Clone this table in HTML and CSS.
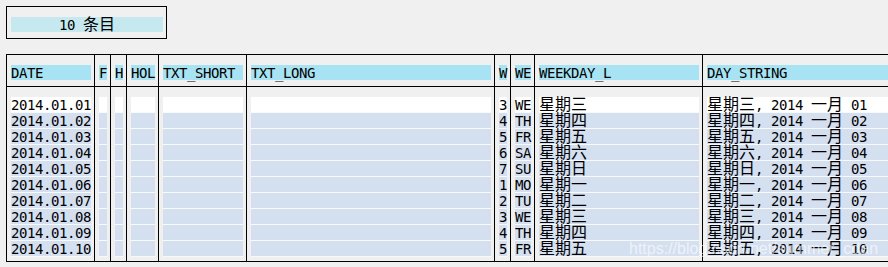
FILE: index.html
```html
<!DOCTYPE html>
<html lang="zh">
<head>
<meta charset="utf-8">
<title>条目</title>
<link rel="stylesheet" href="styles.css">
</head>
<body>
<div class="count"><div class="count-bar">10 <span class="cj">条目</span></div></div>

<div class="tbl">
  <div class="th"><span>DATE</span></div>
  <div class="th"><span>F</span></div>
  <div class="th"><span>H</span></div>
  <div class="th"><span>HOL</span></div>
  <div class="th"><span>TXT_SHORT</span></div>
  <div class="th"><span>TXT_LONG</span></div>
  <div class="th"><span>W</span></div>
  <div class="th"><span>WE</span></div>
  <div class="th"><span>WEEKDAY_L</span></div>
  <div class="th"><span>DAY_STRING</span></div>

  <div class="td">
    <div>2014.01.01</div><div>2014.01.02</div><div>2014.01.03</div><div>2014.01.04</div><div>2014.01.05</div>
    <div>2014.01.06</div><div>2014.01.07</div><div>2014.01.08</div><div>2014.01.09</div><div>2014.01.10</div>
  </div>
  <div class="td"><div></div><div></div><div></div><div></div><div></div><div></div><div></div><div></div><div></div><div></div></div>
  <div class="td"><div></div><div></div><div></div><div></div><div></div><div></div><div></div><div></div><div></div><div></div></div>
  <div class="td"><div></div><div></div><div></div><div></div><div></div><div></div><div></div><div></div><div></div><div></div></div>
  <div class="td"><div></div><div></div><div></div><div></div><div></div><div></div><div></div><div></div><div></div><div></div></div>
  <div class="td"><div></div><div></div><div></div><div></div><div></div><div></div><div></div><div></div><div></div><div></div></div>
  <div class="td">
    <div>3</div><div>4</div><div>5</div><div>6</div><div>7</div><div>1</div><div>2</div><div>3</div><div>4</div><div>5</div>
  </div>
  <div class="td">
    <div>WE</div><div>TH</div><div>FR</div><div>SA</div><div>SU</div><div>MO</div><div>TU</div><div>WE</div><div>TH</div><div>FR</div>
  </div>
  <div class="td">
    <div><span class="cj">星期三</span></div>
    <div><span class="cj">星期四</span></div>
    <div><span class="cj">星期五</span></div>
    <div><span class="cj">星期六</span></div>
    <div><span class="cj">星期日</span></div>
    <div><span class="cj">星期一</span></div>
    <div><span class="cj">星期二</span></div>
    <div><span class="cj">星期三</span></div>
    <div><span class="cj">星期四</span></div>
    <div><span class="cj">星期五</span></div>
  </div>
  <div class="td">
    <div><span class="cj">星期三</span>, 2014 <span class="cj">一月</span> 01</div>
    <div><span class="cj">星期四</span>, 2014 <span class="cj">一月</span> 02</div>
    <div><span class="cj">星期五</span>, 2014 <span class="cj">一月</span> 03</div>
    <div><span class="cj">星期六</span>, 2014 <span class="cj">一月</span> 04</div>
    <div><span class="cj">星期日</span>, 2014 <span class="cj">一月</span> 05</div>
    <div><span class="cj">星期一</span>, 2014 <span class="cj">一月</span> 06</div>
    <div><span class="cj">星期二</span>, 2014 <span class="cj">一月</span> 07</div>
    <div><span class="cj">星期三</span>, 2014 <span class="cj">一月</span> 08</div>
    <div><span class="cj">星期四</span>, 2014 <span class="cj">一月</span> 09</div>
    <div><span class="cj">星期五</span>, 2014 <span class="cj">一月</span> 10</div>
  </div>
</div>

<div class="watermark">https://blog.csdn.net/summer_cdan</div>
</body>
</html>
```
FILE: styles.css
```css
html, body {
  margin: 0;
  height: 100%;
  overflow: hidden;
}
body {
  background: #f0f0f0;
  padding: 6px 0 0 6px;
  box-sizing: border-box;
  font-family: "DejaVu Sans Mono", "Noto Sans CJK SC", monospace;
  font-size: 14px;
  letter-spacing: -0.429px;
  color: #000;
  position: relative;
}
.cj {
  font-family: "Noto Sans CJK SC", sans-serif;
  font-size: 16px;
  letter-spacing: 0;
  line-height: 12px;
}
.count {
  width: 161px;
  height: 33px;
  box-sizing: border-box;
  border: 1px solid #000;
  padding: 10px 3px 6px 4px;
}
.count-bar {
  height: 15px;
  line-height: 17px;
  background: #c5e9ee;
  text-align: center;
  white-space: nowrap;
}
.tbl {
  margin-top: 15px;
  display: grid;
  grid-template-columns: 88px 16px 16px 32px 88px 248px 16px 24px 168px 248px;
  width: max-content;
  border-top: 1px solid #000;
  border-bottom: 1px solid #000;
}
.th {
  border-left: 1px solid #000;
  border-bottom: 1px solid #000;
  padding: 10px 3px 6px 4px;
  min-width: 0;
}
.th span {
  display: block;
  height: 15px;
  line-height: 17px;
  background: #a7e3f3;
  white-space: nowrap;
}
.td {
  border-left: 1px solid #000;
  padding: 10px 3px 4px 4px;
  min-width: 0;
}
.td > div {
  height: 15px;
  line-height: 17px;
  border-bottom: 1px solid #f8f9fb;
  background: #d4dff0;
  white-space: nowrap;
}
.td > div:first-child {
  background: #fff;
}
.watermark {
  position: absolute;
  left: 629px;
  top: 241px;
  font-family: "Liberation Sans", Arial, sans-serif;
  font-size: 16px;
  line-height: 16px;
  letter-spacing: 0;
  color: rgba(255, 255, 255, 0.6);
  white-space: nowrap;
}
```
